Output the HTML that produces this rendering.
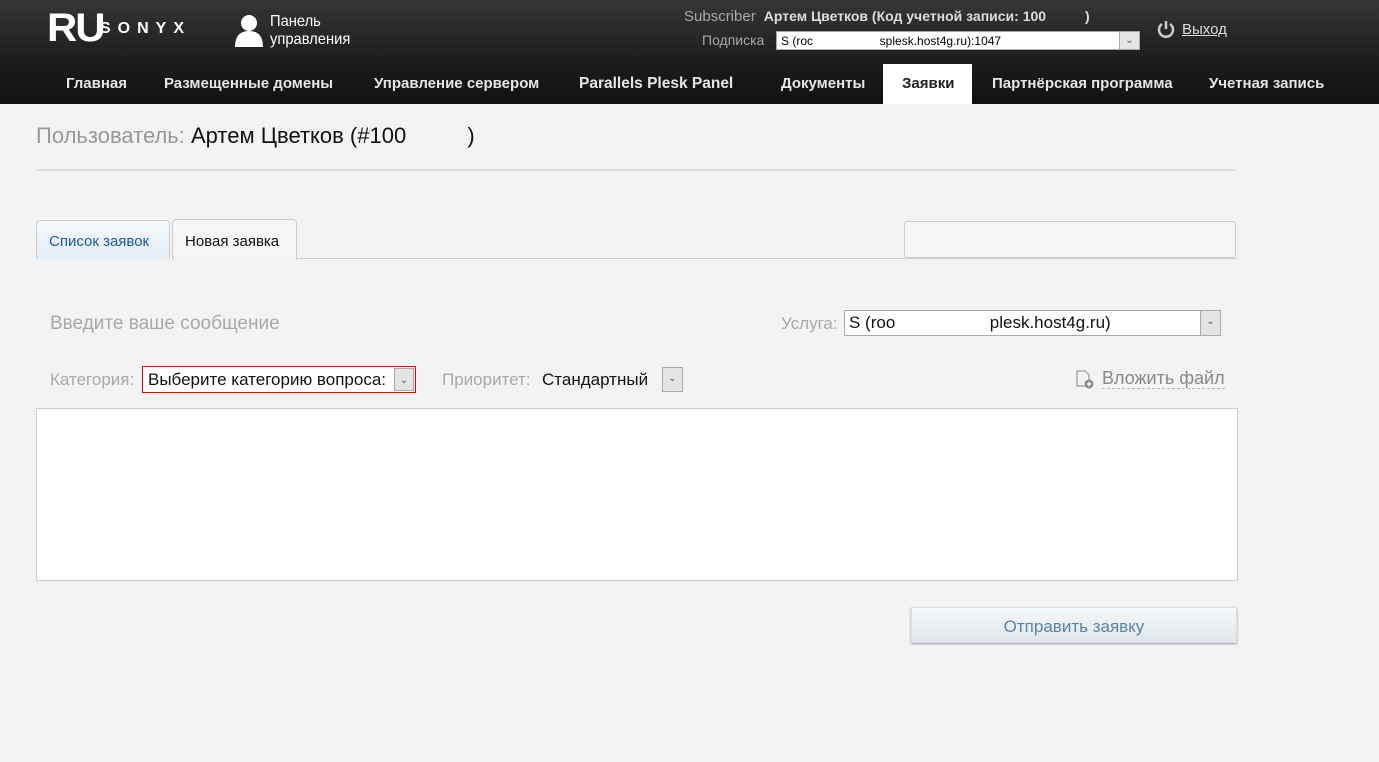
<!DOCTYPE html>
<html><head><meta charset="utf-8"><style>
*{margin:0;padding:0;box-sizing:border-box}
body{width:1379px;height:762px;background:#f3f3f3;font-family:"Liberation Sans","DejaVu Sans",sans-serif;position:relative;overflow:hidden}
.hdr{position:absolute;left:0;top:0;width:1379px;height:104px;background:linear-gradient(#363636,#1e1e1e 55%,#101010)}
.a{position:absolute;white-space:nowrap}
.nav{top:75px;font-size:15px;font-weight:bold;color:#e6e6e6}
.sel{position:absolute;background:#fff;border:1px solid #aaa}
.arr{position:absolute;right:0;top:0;bottom:0;width:20px;background:#e4e4e4;border-left:1px solid #aaa;font-size:10px;color:#555;text-align:center}
.g{color:#a9a9a9}
</style></head><body>
<div class="hdr"></div>
<div class="a" style="left:47px;top:9px;font-size:40px;font-weight:900;color:#fff;letter-spacing:-2px;line-height:38px;transform:scaleX(1.05);transform-origin:left">RU</div>
<div class="a" style="left:100px;top:20px;font-size:16px;font-weight:bold;color:#fff;letter-spacing:7px">SONYX</div>
<svg class="a" style="left:234px;top:14px" width="30" height="33"><circle cx="15" cy="9" r="8" fill="#fff"/><path d="M1 33 Q1 17 15 17 Q29 17 29 33 Z" fill="#fff"/></svg>
<div class="a" style="left:270px;top:13px;color:#fff;font-size:16px;line-height:18px;transform:scaleX(0.92);transform-origin:left">Панель<br>управления</div>
<div class="a" style="left:684px;top:8px;font-size:15px;color:#aaa">Subscriber <b style="color:#ddd;font-size:14px">&nbsp;Артем Цветков (Код учетной записи: 100&nbsp;&nbsp;&nbsp;&nbsp;&nbsp;&nbsp;&nbsp;&nbsp;&nbsp;&nbsp;)</b></div>
<div class="a" style="left:702px;top:32px;font-size:14px;color:#aaa">Подписка</div>
<div class="sel" style="left:776px;top:31px;width:364px;height:19px;font-size:12px;padding:2px 4px;color:#000">S (roc&nbsp;&nbsp;&nbsp;&nbsp;&nbsp;&nbsp;&nbsp;&nbsp;&nbsp;&nbsp;&nbsp;&nbsp;&nbsp;&nbsp;&nbsp;&nbsp;&nbsp;&nbsp;&nbsp;&nbsp;splesk.host4g.ru):1047<span class="arr" style="line-height:17px">&#8964;</span></div>
<svg class="a" style="left:1157px;top:20px" width="18" height="18"><path d="M5 4 A7 7 0 1 0 13 4" stroke="#ccc" stroke-width="2.5" fill="none"/><line x1="9" y1="1" x2="9" y2="9" stroke="#ccc" stroke-width="2.5"/></svg>
<div class="a" style="left:1182px;top:21px;font-size:15px;color:#ddd;text-decoration:underline">Выход</div>
<div class="a" style="left:883px;top:64px;width:89px;height:40px;background:#fff"></div>
<div class="a nav" style="left:66px">Главная</div>
<div class="a nav" style="left:164px">Размещенные домены</div>
<div class="a nav" style="left:374px">Управление сервером</div>
<div class="a nav" style="left:579px;font-size:15.5px">Parallels Plesk Panel</div>
<div class="a nav" style="left:781px">Документы</div>
<div class="a nav" style="left:902px;color:#222">Заявки</div>
<div class="a nav" style="left:992px">Партнёрская программа</div>
<div class="a nav" style="left:1209px">Учетная запись</div>

<div class="a" style="left:36px;top:123px;font-size:22px;color:#999">Пользователь: <span style="color:#111">Артем Цветков (#100&nbsp;&nbsp;&nbsp;&nbsp;&nbsp;&nbsp;&nbsp;&nbsp;&nbsp;&nbsp;)</span></div>
<div class="a" style="left:36px;top:169px;width:1200px;height:2px;background:#ddd"></div>

<div class="a" style="left:36px;top:220px;width:134px;height:39px;border:1px solid #ccc;border-bottom:none;border-radius:4px 4px 0 0;background:linear-gradient(#f5f9fc,#e2edf5);color:#1a5aa8;font-size:15px;padding:12px 0 0 12px">Список заявок</div>
<div class="a" style="left:172px;top:219px;width:125px;height:41px;border:1px solid #ccc;border-bottom:none;border-radius:4px 4px 0 0;background:#f5f5f5;color:#111;font-size:15px;padding:13px 0 0 12px">Новая заявка</div>
<div class="a" style="left:297px;top:258px;width:940px;height:1px;background:#ccc"></div>
<div class="a" style="left:904px;top:221px;width:332px;height:37px;border:1px solid #ccc;border-radius:3px;background:#f5f5f5"></div>

<div class="a g" style="left:50px;top:313px;font-size:19px">Введите ваше сообщение</div>
<div class="a g" style="left:781px;top:314px;font-size:17px">Услуга:</div>
<div class="sel" style="left:844px;top:310px;width:377px;height:26px;font-size:17px;padding:2px 4px;color:#111">S (roo&nbsp;&nbsp;&nbsp;&nbsp;&nbsp;&nbsp;&nbsp;&nbsp;&nbsp;&nbsp;&nbsp;&nbsp;&nbsp;&nbsp;&nbsp;&nbsp;&nbsp;&nbsp;&nbsp;&nbsp;plesk.host4g.ru)<span class="arr" style="line-height:22px">&#8964;</span></div>

<div class="a g" style="left:50px;top:370px;font-size:17px">Категория:</div>
<div class="a" style="left:142px;top:366px;width:274px;height:27px;border:1px solid #e00;background:#fff;font-size:17px;padding:3px 5px;color:#111">Выберите категорию вопроса:<span class="arr" style="line-height:24px;top:1px;bottom:1px;right:1px;border:1px solid #aaa">&#8964;</span></div>
<div class="a g" style="left:442px;top:370px;font-size:17px">Приоритет:</div>
<div class="a" style="left:542px;top:370px;font-size:17px;color:#111">Стандартный</div>
<div class="a" style="left:662px;top:367px;width:21px;height:25px;border:1px solid #aaa;background:#e4e4e4;font-size:10px;color:#555;text-align:center;line-height:22px">&#8964;</div>
<svg class="a" style="left:1075px;top:369px" width="20" height="20"><path d="M2 2 H10 L14 6 V17 H2 Z" fill="none" stroke="#aaa" stroke-width="1.5"/><circle cx="14" cy="15" r="4.5" fill="#888"/><path d="M14 12.5 V17.5 M11.5 15 H16.5" stroke="#fff" stroke-width="1.3"/></svg>
<div class="a" style="left:1102px;top:368px;font-size:18px;color:#888;border-bottom:1px dashed #bbb;line-height:20px">Вложить файл</div>

<div class="a" style="left:36px;top:408px;width:1202px;height:173px;background:#fff;border:1px solid #ccc"></div>
<div class="a" style="left:911px;top:607px;width:326px;height:36px;background:linear-gradient(#f6f9fb,#dfe6ea);border:1px solid #dde;box-shadow:0 1px 2px #999;color:#5a84a6;font-size:17px;text-align:center;line-height:38px">Отправить заявку</div>
</body></html>
